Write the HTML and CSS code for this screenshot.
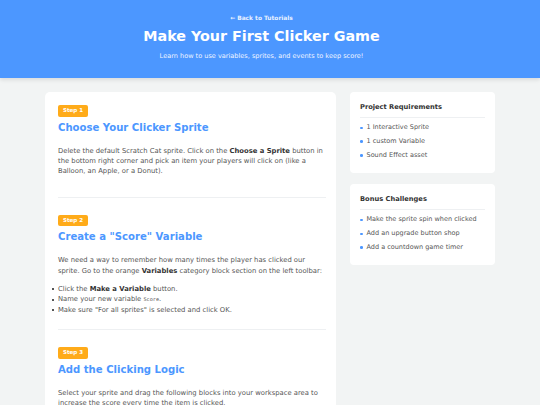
FILE: index.html
```html
<!DOCTYPE html>
<html lang="en">
<head>
    <meta charset="UTF-8">
    <meta name="viewport" content="width=device-width, initial-scale=1.0">
    <title>Make Your First Clicker Game</title>
    <link rel="stylesheet" href="styles.css">
</head>
<body>
    <div class="hero">
        <a class="back-link" href="#">&larr; Back to Tutorials</a>
        <h1>Make Your First Clicker Game</h1>
        <p>Learn how to use variables, sprites, and events to keep score!</p>
    </div>

    <div class="page">
        <div class="lesson">
            <div class="step">
                <span class="badge">Step 1</span>
                <h2>Choose Your Clicker Sprite</h2>
                <p>Delete the default Scratch Cat sprite. Click on the <b>Choose a Sprite</b> button in the bottom right corner and pick an item your players will click on (like a Balloon, an Apple, or a Donut).</p>
            </div>

            <div class="step">
                <span class="badge">Step 2</span>
                <h2>Create a "Score" Variable</h2>
                <p>We need a way to remember how many times the player has clicked our sprite. Go to the orange <b>Variables</b> category block section on the left toolbar:</p>
                <ul>
                    <li>Click the <b>Make a Variable</b> button.</li>
                    <li>Name your new variable <code>Score</code>.</li>
                    <li>Make sure "For all sprites" is selected and click OK.</li>
                </ul>
            </div>

            <div class="step">
                <span class="badge">Step 3</span>
                <h2>Add the Clicking Logic</h2>
                <p>Select your sprite and drag the following blocks into your workspace area to increase the score every time the item is clicked.</p>
            </div>
        </div>

        <div class="sidebar">
            <div class="box">
                <h3>Project Requirements</h3>
                <ul>
                    <li>1 Interactive Sprite</li>
                    <li>1 custom Variable</li>
                    <li>Sound Effect asset</li>
                </ul>
            </div>
            <div class="box">
                <h3>Bonus Challenges</h3>
                <ul>
                    <li>Make the sprite spin when clicked</li>
                    <li>Add an upgrade button shop</li>
                    <li>Add a countdown game timer</li>
                </ul>
            </div>
        </div>
    </div>
</body>
</html>
```

FILE: styles.css
```css
* {
    margin: 0;
    padding: 0;
    box-sizing: border-box;
}
body {
    background: #f2f4f4;
    color: #555;
    font-family: "DejaVu Sans", Verdana, sans-serif;
    font-size: 6.5px;
    font-variant-ligatures: none;
}
.hero {
    background: #4c97ff;
    color: white;
    text-align: center;
    height: 78px;
    padding: 14px 17px 0 0;
    box-shadow: 0 2px 4px rgba(0, 0, 0, 0.1);
}
.back-link {
    display: block;
    color: #e8f1ff;
    font-weight: bold;
    font-size: 5.9px;
    line-height: 9px;
    text-decoration: none;
}
.hero h1 {
    font-size: 14.3px;
    line-height: 17px;
    margin-top: 5px;
}
.hero p {
    font-size: 6.55px;
    line-height: 9px;
    margin-top: 7px;
    color: #eef4ff;
}
.page {
    width: 450px;
    margin: 14px auto 0;
    display: flex;
    gap: 14px;
    align-items: flex-start;
}

/* lesson steps */
.lesson {
    flex: 1;
    background: white;
    border-radius: 5px;
    padding: 13px 10px 20px 13px;
}
.step {
    padding-bottom: 14px;
    border-bottom: 1px solid #eef0f2;
    margin-bottom: 17px;
}
.badge {
    display: table;
    background: #ffab19;
    color: white;
    font-weight: bold;
    font-size: 5.5px;
    line-height: 7.5px;
    padding: 2px 5px;
    border-radius: 2px;
}
.step h2 {
    color: #4c97ff;
    font-size: 10.1px;
    line-height: 12px;
    margin-top: 5px;
}
.step p {
    font-size: 6.8px;
    line-height: 10.4px;
    margin: 12px 0 6px;
}
.step b {
    color: #333;
}
.step ul {
    list-style: none;
    margin-top: 7.6px;
}
.step li {
    position: relative;
    font-size: 6.8px;
    line-height: 10.6px;
}
.step li::before {
    content: "";
    position: absolute;
    left: -6px;
    top: 4.5px;
    width: 2px;
    height: 2px;
    background: #555;
}
code {
    font-family: "DejaVu Sans Mono", monospace;
    font-size: 5.2px;
}

/* sidebar boxes */
.sidebar {
    width: 145px;
    display: flex;
    flex-direction: column;
    gap: 11px;
}
.box {
    background: white;
    border-radius: 4px;
    padding: 11px 10px;
}
.box h3 {
    font-size: 6.7px;
    line-height: 8px;
    color: #333;
    padding-bottom: 5.6px;
    border-bottom: 1px solid #eef0f2;
    margin-bottom: 3.5px;
}
.box ul {
    list-style: none;
}
.box li {
    line-height: 13.7px;
    padding-left: 6.5px;
    position: relative;
}
.box li::before {
    content: "";
    position: absolute;
    left: 0;
    top: 5.5px;
    width: 2.6px;
    height: 2.6px;
    border-radius: 50%;
    background: #4c97ff;
}
```
